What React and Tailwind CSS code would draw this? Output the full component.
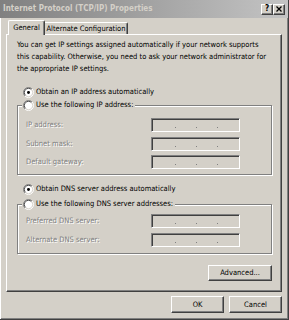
import React from 'react';

const raised =
  'border border-t-white border-l-white border-r-[#404040] border-b-[#404040] shadow-[inset_-1px_-1px_0_#808080]';
const sunken =
  'border border-t-[#808080] border-l-[#808080] border-r-white border-b-white shadow-[inset_1px_1px_0_#404040,inset_-1px_-1px_0_#d4d0c8]';
const etched = 'border border-[#808080] shadow-[inset_1px_1px_0_#fff,1px_1px_0_#fff]';
const disabledText = 'text-[#808080] [text-shadow:1px_1px_0_#fff]';

const Radio = ({ checked }) => (
  <svg width="11" height="11" viewBox="0 0 12 12" className="shrink-0">
    <circle cx="6" cy="6" r="5" fill="#fff" />
    <path d="M2.1 9.9A5.5 5.5 0 0 1 9.9 2.1" fill="none" stroke="#808080" />
    <path d="M9.9 2.1A5.5 5.5 0 0 1 2.1 9.9" fill="none" stroke="#fff" />
    <path d="M2.8 9.2A4.5 4.5 0 0 1 9.2 2.8" fill="none" stroke="#404040" />
    <path d="M9.2 2.8A4.5 4.5 0 0 1 2.8 9.2" fill="none" stroke="#d4d0c8" />
    {checked && <circle cx="6" cy="6" r="1.6" fill="#000" />}
  </svg>
);

const RadioRow = ({ checked, label, className = '' }) => (
  <div className={`flex items-center gap-[2px] h-[12px] ${className}`}>
    <Radio checked={checked} />
    <span>{label}</span>
  </div>
);

const IpField = ({ label, className = '' }) => (
  <div className={`flex items-center h-[14px] ${className}`}>
    <span className={`w-[125px] ${disabledText}`}>{label}</span>
    <div className={`w-[89px] h-[14px] ${sunken} flex items-end pb-[3px] pl-[23px] gap-[20px]`}>
      <span className="w-px h-px bg-[#808080]" />
      <span className="w-px h-px bg-[#808080]" />
      <span className="w-px h-px bg-[#808080]" />
    </div>
  </div>
);

const Group = ({ title, children, className = '' }) => (
  <div className={`w-[255px] ml-[10px] flex flex-col ${etched} ${className}`}>
    <div className="-mt-[7px] ml-[4px] self-start bg-[#d4d0c8] pl-[1px] pr-[2px]">
      <RadioRow label={title} />
    </div>
    {children}
  </div>
);

export default function App() {
  return (
    <div className="w-[289px] h-[320px] bg-[#d4d0c8] flex flex-col border-r border-b border-r-[#404040] border-b-[#404040] shadow-[inset_1px_0_0_#fff,inset_-1px_-1px_0_#808080] font-['DejaVu_Sans_Condensed','Liberation_Sans',sans-serif] text-[7.5px] leading-[12px] text-black overflow-hidden">
      {/* title bar */}
      <div className="h-[18px] shrink-0 flex items-center bg-linear-to-r from-[#808080] to-[#c4c4c4] pl-[3px] pr-[3px]">
        <span className="font-bold text-[8px] text-[#d4d0c8]">Internet Protocol (TCP/IP) Properties</span>
        <div className="ml-auto flex">
          <div className={`w-[12px] h-[11px] bg-[#d4d0c8] ${raised} flex items-center justify-center font-bold text-[8px] leading-none`}>?</div>
          <div className={`w-[12px] h-[11px] bg-[#d4d0c8] ${raised} flex items-center justify-center`}>
            <svg width="6" height="6" viewBox="0 0 6 6">
              <path d="M0.5 0.5L5.5 5.5M5.5 0.5L0.5 5.5" stroke="#000" strokeWidth="1.3" />
            </svg>
          </div>
        </div>
      </div>

      <div className="px-[6px] mt-[2px] flex flex-col">
        {/* tabs */}
        <div className="h-[14px] flex items-end pl-[2px]">
          <div className="relative z-10 w-[37px] h-[15px] -mb-px bg-[#d4d0c8] border-t border-l border-r border-t-white border-l-white border-r-[#404040] shadow-[inset_-1px_0_0_#808080] rounded-t-[2px] flex items-start justify-center pt-[1px]">
            General
          </div>
          <div className="w-[83px] h-[12px] bg-[#d4d0c8] border-t border-r border-t-white border-r-[#404040] shadow-[inset_-1px_0_0_#808080] rounded-tr-[2px] flex items-start justify-center">
            Alternate Configuration
          </div>
        </div>

        {/* panel */}
        <div className={`h-[258px] ${raised} flex flex-col`}>
          <p className="pl-[10px] pt-[4px] w-[270px]">
            You can get IP settings assigned automatically if your network supports
            <br />
            this capability. Otherwise, you need to ask your network administrator for
            <br />
            the appropriate IP settings.
          </p>

          <RadioRow checked label="Obtain an IP address automatically" className="mt-[11px] ml-[16px]" />

          <Group title="Use the following IP address:" className="mt-[7px] pb-[5px]">
            <div className="pl-[8px] flex flex-col">
              <IpField label="IP address:" className="mt-[7px]" />
              <IpField label="Subnet mask:" className="mt-[5px]" />
              <IpField label="Default gateway:" className="mt-[4px]" />
            </div>
          </Group>

          <RadioRow checked label="Obtain DNS server address automatically" className="mt-[8px] ml-[16px]" />

          <Group title="Use the following DNS server addresses:" className="mt-[9px] pb-[6px]">
            <div className="pl-[8px] flex flex-col">
              <IpField label="Preferred DNS server:" className="mt-[4px]" />
              <IpField label="Alternate DNS server:" className="mt-[5px]" />
            </div>
          </Group>

          <div className="flex justify-end pr-[9px] mt-[11px]">
            <div className={`w-[64px] h-[16px] ${raised} flex items-center justify-center`}>Advanced...</div>
          </div>
        </div>

        {/* buttons */}
        <div className="flex justify-end gap-[5px] mt-[4px]">
          <div className={`w-[53px] h-[17px] ${raised} flex items-center justify-center`}>OK</div>
          <div className={`w-[53px] h-[17px] ${raised} flex items-center justify-center`}>Cancel</div>
        </div>
      </div>
    </div>
  );
}
